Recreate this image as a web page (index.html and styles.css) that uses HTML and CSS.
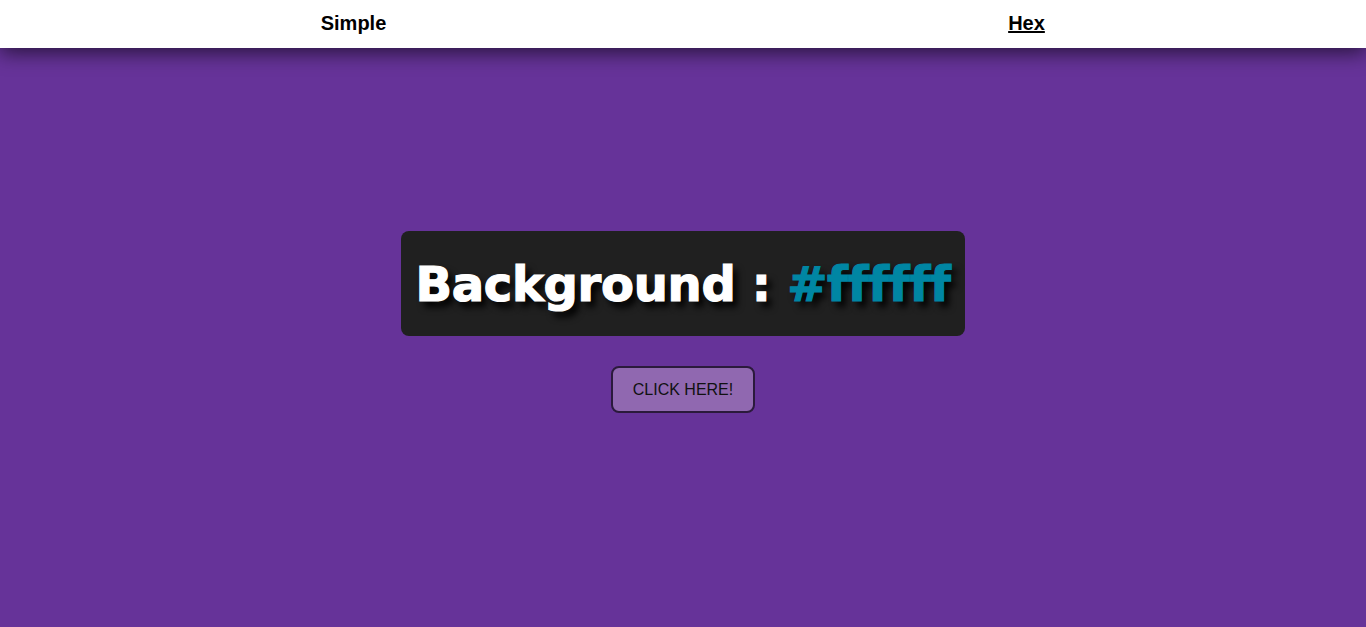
FILE: index.html
```html
<!DOCTYPE html>
<html>
<head>
<meta charset="utf-8">
<link rel="stylesheet" href="styles.css">
</head>
<body>
<nav class="nav">
  <ul class="nav-list">
    <li class="nav-item"><a class="nav-link" href="#">Simple</a></li>
    <li class="nav-item"><a class="nav-link nav-link-active" href="#">Hex</a></li>
  </ul>
</nav>
<main class="main">
  <div class="color-box">
    <h2 class="color-title">Background : <span class="color-value">#ffffff</span></h2>
  </div>
  <button class="btn">CLICK HERE!</button>
</main>
</body>
</html>
```
FILE: styles.css
```css
html, body {
  margin: 0;
  padding: 0;
  height: 100%;
}
body {
  background: #663399;
  font-family: "Liberation Sans", Arial, sans-serif;
  overflow: hidden;
}
.nav {
  position: relative;
  z-index: 2;
  background: #fff;
  height: 48px;
  box-shadow: 0 5px 20px rgba(0, 0, 0, 0.6);
}
.nav-list {
  list-style: none;
  margin: 0;
  padding: 0 3px 2px 17px;
  box-sizing: border-box;
  height: 100%;
  display: flex;
}
.nav-item {
  flex: 1;
  display: flex;
  align-items: center;
  justify-content: center;
}
.nav-link {
  color: #000;
  text-decoration: none;
  font-weight: bold;
  font-size: 20px;
  line-height: 23px;
}
.nav-link-active {
  text-decoration: underline;
}
.main {
  display: flex;
  flex-direction: column;
  align-items: center;
  padding-top: 183px;
}
.color-box {
  background: #202020;
  border-radius: 8px;
  width: 564px;
  height: 105px;
  box-sizing: border-box;
  display: flex;
  align-items: center;
  justify-content: center;
}
.color-title {
  margin: 0;
  color: #fff;
  font-family: "DejaVu Sans", sans-serif;
  font-weight: bold;
  font-size: 48px;
  line-height: 1;
  white-space: nowrap;
  text-shadow: 5px 6px 7px #000;
  -webkit-text-stroke: 1.2px currentColor;
  letter-spacing: -0.3px;
}
.color-value {
  color: #0086a3;
}
.btn {
  margin-top: 30px;
  width: 144px;
  height: 47px;
  background: #9068b0;
  border: 2px solid #2b1a3c;
  border-radius: 8px;
  font-family: "Liberation Sans", Arial, sans-serif;
  font-size: 16px;
  color: #111;
  padding: 0;
}
```
